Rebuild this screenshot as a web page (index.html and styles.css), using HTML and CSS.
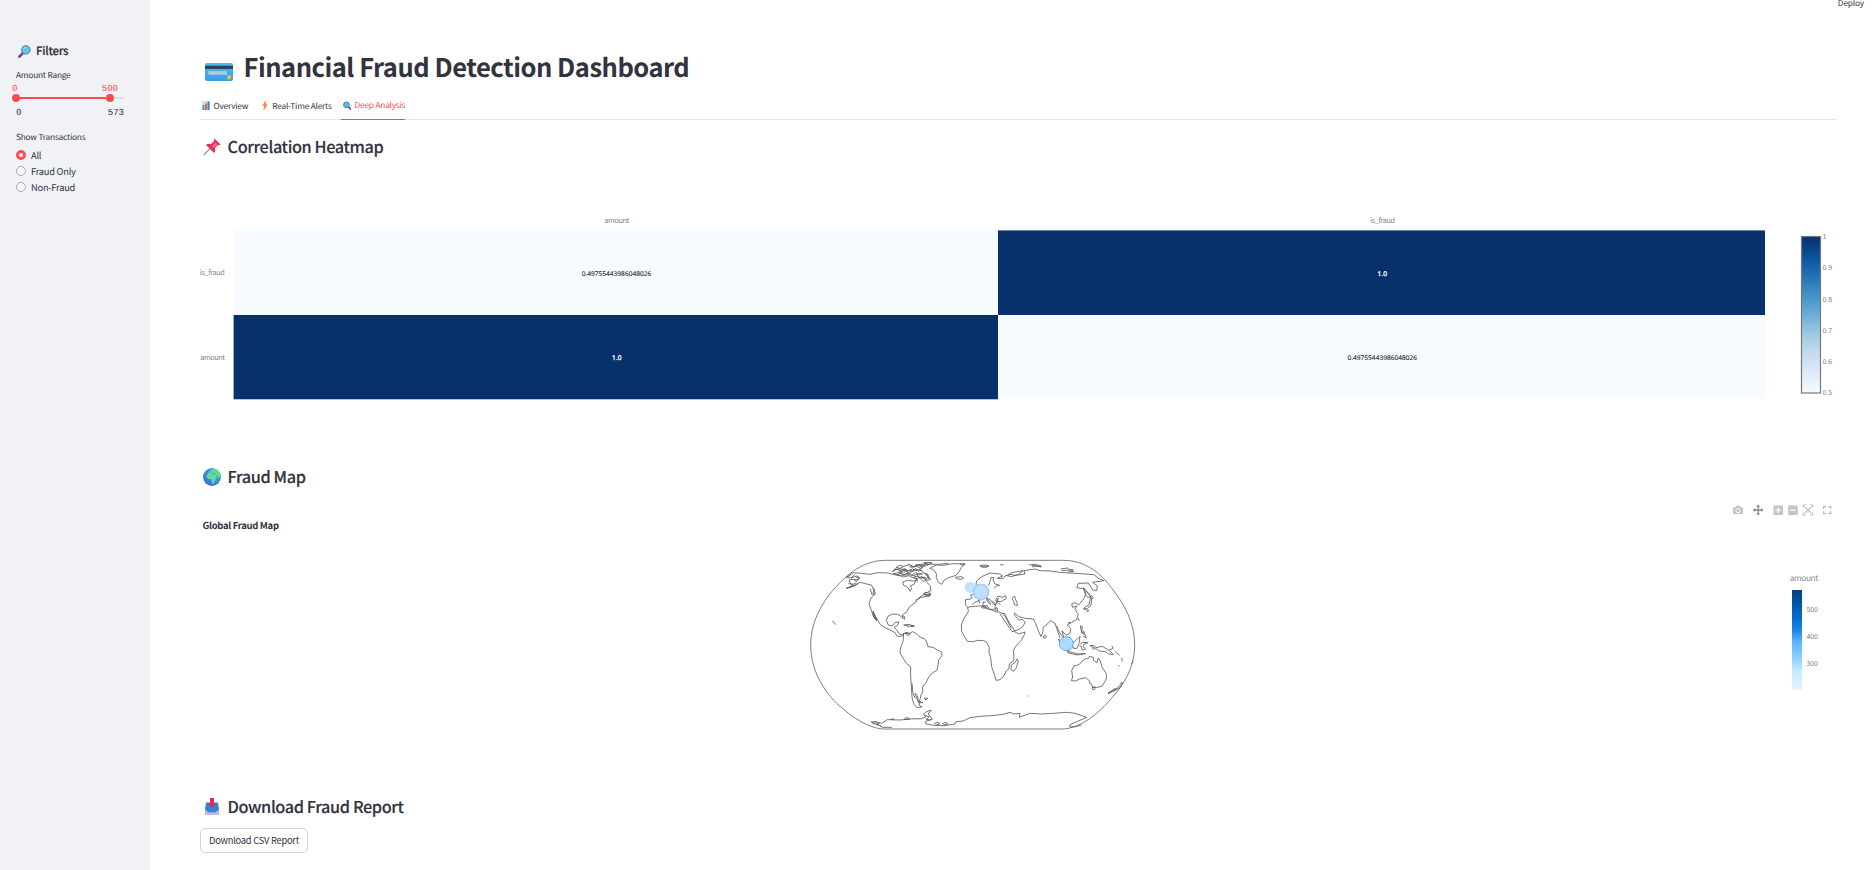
FILE: index.html
```html
<!DOCTYPE html>
<html lang="en">
<head>
<meta charset="utf-8">
<title>Financial Fraud Detection Dashboard</title>
<link rel="stylesheet" href="styles.css">
</head>
<body>
<div class="app">
  <aside class="sidebar">
    <h2 class="side-title">
      <svg class="side-icon" viewBox="0 0 24 24"><path d="M2.500 21.500 10 14" stroke="#7d4a86" stroke-width="5" stroke-linecap="round"/><circle cx="14.500" cy="9" r="7.800" fill="#5fc9ee" stroke="#4d6f9e" stroke-width="1.800"/><path d="M10 8q1-4 5-4" stroke="#9be4fb" stroke-width="1.600" fill="none"/></svg>
      <span class="t-filters">Filters</span>
    </h2>
    <div class="label t-range">Amount Range</div>
    <div class="slider">
      <div class="thumb-values"><span>0</span><span>500</span></div>
      <div class="track"><i class="thumb"></i><i class="fill"></i><i class="thumb"></i></div>
      <div class="limits"><span>0</span><span>573</span></div>
    </div>
    <div class="label t-show">Show Transactions</div>
    <div class="radios">
      <label class="radio"><i class="dot on"></i><span>All</span></label>
      <label class="radio"><i class="dot"></i><span>Fraud Only</span></label>
      <label class="radio"><i class="dot"></i><span>Non-Fraud</span></label>
    </div>
  </aside>

  <main class="main">
    <div class="deploy">Deploy</div>
    <h1 class="title">
      <svg class="card-icon" viewBox="0 0 28 18"><defs><linearGradient id="card" x2="0" y2="1"><stop stop-color="#42c4ee"/><stop offset="1" stop-color="#3a9be6"/></linearGradient></defs><rect width="28" height="18" rx="2" fill="url(#card)"/><rect y="2.700" width="28" height="3.200" fill="#30404f"/><rect x="3.300" y="8" width="18.700" height="3.800" fill="#a4c7e0"/><rect x="5" y="9" width="11.500" height="1.800" fill="#c9c3cb"/><rect x="22.300" y="12.300" width="3.600" height="4" rx="1" fill="#f0c043"/></svg>
      <span>Financial Fraud Detection Dashboard</span>
    </h1>
    <nav class="tabs">
      <a class="tab"><svg class="tab-icon" viewBox="0 0 8 9"><rect width="8" height="9" fill="#d5e0e8"/><path d="M.6 4h1.800v5H.6z" fill="#36b45c"/><path d="M3 2.500h1.900V9H3z" fill="#e0527b"/><path d="M5.500.5h2V9h-2z" fill="#3682d6"/></svg><span>Overview</span></a>
      <a class="tab tab-alerts"><svg class="tab-icon" viewBox="0 0 8 9"><path d="M4.800 0 1.600 4.600h2L2.600 9 6.400 3.800H4.300z" fill="#fa7a3c" stroke="#fa7a3c" stroke-width=".5"/></svg><span>Real-Time Alerts</span></a>
      <a class="tab tab-deep active"><svg class="tab-icon" viewBox="0 0 8 9"><path d="M5.300 5.800 7.600 8" stroke="#6a3f84" stroke-width="1.700" stroke-linecap="round"/><circle cx="3.400" cy="3.800" r="2.900" fill="#4bc0ea" stroke="#3c6f98" stroke-width=".8"/></svg><span>Deep Analysis</span></a>
    </nav>

    <h2 class="section">
      <svg class="section-icon" viewBox="0 0 18 18"><path d="M.8 17 7.500 10" stroke="#a49aa8" stroke-width="1.300"/><path d="M3 7q2-2 5-1l3-3q-.5-1.500.5-2.500l6 6q-1 1-2.500.5l-3 3q1 3-1 5z" fill="#e0325f"/><path d="M9 8l3.500-3.500 2 2L11 10z" fill="#f8618a"/></svg>
      <span class="t-heat">Correlation Heatmap</span>
    </h2>
    <svg class="chart" viewBox="200 161 1637 300">
      <defs><linearGradient id="blues" x2="0" y2="1"><stop stop-color="#08306b"/><stop offset=".125" stop-color="#08519c"/><stop offset=".25" stop-color="#2171b5"/><stop offset=".375" stop-color="#4292c6"/><stop offset=".5" stop-color="#6baed6"/><stop offset=".625" stop-color="#9ecae1"/><stop offset=".75" stop-color="#c6dbef"/><stop offset=".875" stop-color="#deebf7"/><stop offset="1" stop-color="#f7fbff"/></linearGradient></defs>
      <rect x="234" y="230.500" width="765" height="84.500" fill="#f7fbff"/>
      <rect x="998" y="315" width="767" height="84" fill="#f7fbff"/>
      <rect x="998" y="230.400" width="767" height="84.600" fill="#08306b"/>
      <rect x="233.600" y="315" width="764.400" height="84.300" fill="#08306b"/>
      <g class="axis">
        <text x="604.300" y="223" textLength="25">amount</text>
        <text x="1370" y="223" textLength="25">is_fraud</text>
        <text x="199.800" y="275" textLength="25">is_fraud</text>
        <text x="200.300" y="360" textLength="24.700">amount</text>
      </g>
      <g class="cell">
        <text x="581.700" y="276" textLength="69.500">0.49755443986048026</text>
        <text x="1347.500" y="360" textLength="69.500">0.49755443986048026</text>
        <text class="inv" x="612" y="360" textLength="9.500">1.0</text>
        <text class="inv" x="1377.500" y="276" textLength="9.500">1.0</text>
      </g>
      <rect x="1801.500" y="236.500" width="19" height="156.500" fill="url(#blues)" stroke="#777" stroke-width="1.200"/>
      <g class="tick">
        <text x="1822.500" y="239">1</text><text x="1822.500" y="270.200">0.9</text><text x="1822.500" y="302">0.8</text><text x="1822.500" y="333">0.7</text><text x="1822.500" y="364.300">0.6</text><text x="1822.500" y="395.200">0.5</text>
      </g>
    </svg>

    <h2 class="section">
      <svg class="section-icon" viewBox="0 0 18 18"><defs><radialGradient id="sea" cx=".65" cy=".3" r=".8"><stop stop-color="#3cc4ea"/><stop offset="1" stop-color="#3b62d8"/></radialGradient></defs><circle cx="9" cy="9" r="9" fill="url(#sea)"/><path d="M5.500 5 8 2.500l4-2q3.500 1 5.300 5l.2 3-2 1.500-1.500-1-1.500 2-2 5H9.500L8.500 11 5 11 3.500 8.500z" fill="#5fdc9a"/><path d="M8 5l3 1 2-1M13.500 7l1.500 3" stroke="#3aa5c0" fill="none"/></svg>
      <span class="t-map">Fraud Map</span>
    </h2>
    <svg class="chart" viewBox="200 491 1637 300">
      <defs><linearGradient id="amt" x2="0" y2="1"><stop stop-color="#00427c"/><stop offset=".25" stop-color="#0068c9"/><stop offset=".4" stop-color="#1c83e1"/><stop offset=".52" stop-color="#60b4ff"/><stop offset=".65" stop-color="#83c9ff"/><stop offset=".82" stop-color="#c7ebff"/><stop offset="1" stop-color="#e4f5ff"/></linearGradient></defs>
      <text class="chart-title" x="202.500" y="529.300" textLength="76.500">Global Fraud Map</text>

      <!-- mode bar -->
      <g fill="#c4c4c6">
        <path d="M1733 507.500h2.500l1-1.700h3l1 1.700h2.500v6.500h-10z"/><circle cx="1738" cy="510.600" r="2.100" fill="none" stroke="#fff" stroke-width=".9"/>
        <rect x="1773.500" y="505.500" width="9.500" height="9.500"/><path d="M1775.500 510.200h5.500M1778.200 507.500v5.500" stroke="#fff" stroke-width="1.300"/>
        <rect x="1788.200" y="505.500" width="9.500" height="9.500"/><path d="M1790.200 510.200h5.500" stroke="#fff" stroke-width="1.300"/>
        <path d="M1803.300 507.500v-2.300h2.300M1810.300 505.200h2.300v2.300M1812.600 512.500v2.300h-2.300M1805.600 514.800h-2.300v-2.300M1805 507l6 6M1811 507l-6 6" fill="none" stroke="#bbb" stroke-width="1.200"/>
        <path d="M1823.600 509v-2.300h2.400M1828.300 506.700h2.400v2.300M1830.700 511.300v2.300h-2.400M1826 513.600h-2.400v-2.300" fill="none" stroke="#bbb" stroke-width="1.200"/>
        <path d="M1753.500 510h9.500M1758.200 505.300v9.500" stroke="#888" stroke-width="1.300"/><path d="M1753 510l2-2v4zM1763.400 510l-2-2v4zM1758.200 504.800l-2 2h4zM1758.200 515.200l-2-2h4z" fill="#888"/>
      </g>

      <g transform="translate(800 550) scale(.33333)">
        <g class="coast">
          <!-- globe frame -->
          <path class="frame" d="M252 31H790C860 31 907 75 937 117C975 165 1004 220 1004 285C1004 350 975 400 930 450C905 480 845 537 785 537H247C190 532 130 480 100 450C60 405 32 350 32 285C32 220 62 165 95 125C130 85 180 33 252 31Z"/>
          <!-- North America -->
          <path d="M137 83L148 76 160 68 185 70 210 73 235 68 262 69 282 74 300 76 330 74 345 78 352 90 340 93 322 91 308 96 311 106 320 110 327 117 330 124 335 116 331 107 342 103 347 92 355 83 366 80 376 88 382 98 390 107 393 122 382 127 370 132 380 136 392 130 390 138 375 140 360 143 351 150 346 158 335 165 325 174 322 184 308 194 309 207 303 199 293 193 277 192 264 199 259 211 265 225 276 228 285 218 297 216 292 227 283 232 290 240 297 251 308 257 312 249 304 259 292 259 285 248 270 240 252 231 241 224 234 212 224 195 219 184 224 200 230 213 220 198 213 178 207 161 212 147 220 135 223 120 214 105 196 101 181 97 166 104 152 110 139 115 160 106 150 99 147 90 160 88 169 95 180 83 170 78 155 83 165 73"/>
          <path d="M166 80l10 4-3 6-12-2M145 101l14 2 10-5M139 115l20-5 16-9M211 116l5 18M217 116l8 4-6 4 7 3-2 8-7-6M219 183l5 13 7 14M218 192l7 15M311 225l16-2 16 6-14 0zM320 227l5 5M330 228l14 0M314 250l14 1M306 197l8 3 0 9M375 127l16 3-2 7-15-4zM346 151l14-7M357 143l14-9 18 2M97 214l5 3 5 7M153 73l-11 10 14 1"/>
          <!-- Arctic islands -->
          <path d="M277 65l14-8 10 4 14-5 8 6 14-5 14 5 17-9-5-7 20-4-12-4 25 0-20 11-20-4-16 5-12-7-16 6-14-3-12 9zM280 71l22-4 8 8 16-7 9 8 12-9 12 8 10-8 14 10 9 11-10 3-7-10-12 4-10-7-14 5-12-6-16 4zM285 59l15-3 18 5M295 67l22-7 18 5 20-7 15 6M342 76l18-6 8 5M331 52l18-3 14 6 12-10M310 68l8-5 7 8 9-5M374 70l10 3 2 14"/>
          <path d="M288 52l12 3 10-4M296 62l10 3 8-7 10 8M300 72l8-7M330 60l9 3 8-8 8 9 10-4M326 47l14 4 14-5 12 5M350 70l6 14 12-2 8 6 8-6-6-10M340 84l10 4 2 9M362 88l8 6 8-2M290 75l12-5 13 5 10-6"/>
          <!-- Greenland and Iceland -->
          <path d="M345 45l30-3 40 1 30-3M392 53l18-8 20 1 28-5 36 1-10 10-6 12-10 12-22 7-13 7-8 13-9-5-7-15 0-12-8-12-12-4zM466 82l19-2 6 4-7 4-12-1z"/>
          <!-- South America -->
          <path d="M311 252l7-5 11 3 9-5 11 6 12 11 12 4 6 7 5 17 15 2 13 8 13 6 1 11-10 13-2 17-3 13-18 12-7 10-9 18-6 5-3 7 0 14-5 9-2 10-3 9 0 12 8 5-15 2-9-10-5-15-2-20-1-20-2-30 0-28-12-9-9-14-11-18 1-12 3-10 5-12zM317 247l5 10 10-5M336 400l3 30 7 15M345 430l8 8 1 14 15 6-14 0zM372 444l11 1-5 5z"/>
          <!-- Antarctica -->
          <path d="M276 532L247 532 235 524 220 521 214 516 228 515 245 520 262 509 300 510 330 507 365 506 378 500 370 493 378 486 394 480 384 492 392 500 397 508 376 514 378 522 400 526 432 527 465 522 468 515 490 513 510 503 540 499 575 497 610 493 630 487 641 492 660 490 658 502 690 490 725 492 760 490 800 487 825 490 860 502 835 513 810 524 810 531 828 530 845 525"/>
          <path d="M216 518l22 2-8 4 16 5M270 508l12-1-6 3M313 505l12-2 3 5-15 1M402 521l12-5 5 6-13 4M426 521l12-4 6 5-16 4M374 496l14 4-10 8 14 2"/>
          <!-- Africa -->
          <path d="M503 172l10-2 22-2 27-1 5 10 8 3 14 6 8 0 10 4 8 1 6 15 8 14 9 12 7 14 12 6 18-6-2 8-9 17-17 18-7 13 2 18-1 12-13 10-1 14-8 7-9 17-10 9-12 2-4-15-9-26-3-27-5-15 1-16-9-16-8-4-19-1-12 4-18-1-9-15-8-15-1-19 8-20 13-20zM651 327l4 7-6 19-8 11-8-5 1-14 12-8zM682 438l3 0"/>
          <!-- Europe -->
          <path d="M503 171l-6-5-1-17 17-2 4-6-6-5 8-3 10-8M517 165l7-8 9-3 7-6 6-6 12 1 5 12 9 8-4-8-9-12 13 7 8 12 8 3 2-12 5-8-3 12 10 8M543 172l12-4 7 6-15 0M533 152l5 0 0 8"/>
          <path d="M534 112L528 103 530 93 545 80 570 69 598 72 608 78 592 85 610 85 615 78 630 73 645 76 675 72 672 62 705 57 720 62 750 63 780 67 825 70 855 72 882 74 895 85 912 92 878 97 892 108 890 122 878 120 865 99 835 100 830 113 852 116 858 130 852 145 836 165 825 158 815 162 818 172 830 168 825 178 835 193 830 208 815 217 802 225 812 236 810 250 798 256 786 242 792 266 780 250 770 228M565 107l5-12 3-12 9-1-3 8 6 12 14 4-10 2-7 8"/>
          <path d="M577 153l9 8-1 16 6-4 2 10-10-5-18 0-16-8 0-14 8 0M586 151l8-13 13 4 10-5 2 8-14 9-13 1zM636 145l8-7 2 9 5 10 1 10-9-3-2-10z"/>
          <!-- Arctic Ocean islands -->
          <path d="M480 44l15-3-8 9M538 47l14-2 15 2-8 5-16-1M541 49l22 0M600 44l11 1M686 45l20-2 18 6-15-1-12 3M695 46l30 5M782 57l20-3 8 6 12 4-18 2M785 62l34-3M622 77l10-8 20-4 18-3-14 11-22 7z"/>
          <!-- Southern Asia -->
          <path d="M600 191l9 14 12 18 15 22 17-5 14-9 9-14-10-9-9 3-6-7-8-10 0-5 14 11 18 5 25 2 7 13 6 18 10 22 6-15 0-12 24-21 12 8 5 15 8 23 2 6M730 258l7-2 2 6-7 3zM803 219l7-2 0 5M832 208l3-3 3 8M606 190l10 10 18 35"/>
          <!-- Japan -->
          <path d="M851 113l6 8 9 12 6 7-9 2-7-9-4-12zM872 139l3 11-2 16-12 10-11 1 6-7 11-5 3-15zM853 177l14 5-7 3M861 125l10 10 10 8-8 5"/>
          <!-- Indonesia and the Philippines -->
          <path d="M775 267l12 10 12 14 8 13-13-6-12-17zM818 280l12-11 10-10-3 22-7 15-12-2zM801 305l16 2 16 5 24-1-26 4-28-7M841 282l7-5 16 1-12 5-3 6 8 8-10 3-3-11-6-2M841 228l6 2-2 10 9 7-9 0zM847 250l8 3 4 11-10-6M843 245l12 9M870 287l12-1 6 7 18-4 18 10 16 14-14-1-10-7-18-2-10-7zM876 293l8 6M928 300l11-5-3-7M945 305l14 11M955 345l3 5M967 334l-2-10M993 342l5-4 0-6"/>
          <!-- Oceania -->
          <path d="M814 392l4-11-3-19 7-14 15-4 10-11 10-7 9 0 2-7 12 3 0 9 11 7 4-14 6 9 5 18 13 20 0 16-7 12-6 9-17 5-12-3-3-8-5-2 0-7-12-10-18 4-12 6zM877 412l10 0-5 8-5-2zM950 415l8-6 8-13 0 8-4 8-14 8-24 11 18-14zM924 428l26-11"/>
        </g>
        <circle cx="511" cy="112" r="17" fill="#bfe4ff"/>
        <circle cx="543" cy="126" r="24" fill="#bfe0fd" stroke="#7db6ef" stroke-width="2"/><circle cx="543" cy="126" r="20" fill="none" stroke="#a5cdf7" stroke-width="2"/>
        <circle cx="799" cy="281" r="21" fill="#b0dafd" stroke="#4c9fee" stroke-width="2.500"/>
      </g>

      <text class="tick legend" x="1789.700" y="581" textLength="28.700">amount</text>
      <rect x="1792" y="590" width="10" height="100" fill="url(#amt)"/>
      <g class="tick"><text x="1806.500" y="612.200" textLength="11.500">500</text><text x="1806.500" y="639.200" textLength="11.500">400</text><text x="1806.500" y="666.200" textLength="11.500">300</text></g>
    </svg>

    <h2 class="section">
      <svg class="section-icon" viewBox="0 0 18 18"><path d="M2 9h14v7.500H2z" fill="#b9a8d6"/><path d="M3 4.500h12l1 7-3 3H5l-3-3z" fill="#2f86d8"/><path d="M2 11.500l3.500 3h7l3.500-3V17H2z" fill="#c5b6e2"/><path d="M7 0h4v5.500h2.300L9 10 4.700 5.500H7z" fill="#dc2b57"/></svg>
      <span class="t-dl">Download Fraud Report</span>
    </h2>
    <button class="download"><span>Download CSV Report</span></button>
  </main>
</div>
</body>
</html>
```

FILE: styles.css
```css
* { box-sizing: border-box; }
html, body { margin: 0; height: 100%; overflow: hidden; background: #fff; }
body { font-family: "Noto Sans CJK JP", "Noto Sans CJK SC", sans-serif; color: #31333f; font-size: 8.300px; text-rendering: geometricPrecision; }
svg { display: block; }
h1, h2 { margin: 0; white-space: nowrap; }
span { white-space: nowrap; }

.app { display: flex; height: 870px; }

.sidebar { flex: 0 0 150px; background: #f0f2f6; padding: 41px 26px 0 16px; }
.side-title { display: flex; align-items: center; height: 20px; font-size: 11.400px; font-weight: 500; padding-left: 2px; gap: 5px; letter-spacing: -.02em; -webkit-text-stroke: .2px #31333f; }
.side-icon { width: 13px; height: 13px; }
.label { height: 14px; line-height: 14px; margin-top: 7px; letter-spacing: -.025em; }
.slider { font-family: "Liberation Mono", monospace; font-size: 9.200px; letter-spacing: -.1px; }
.thumb-values { display: flex; justify-content: space-between; width: 106px; margin-left: -4px; color: #ff4b4b; height: 12px; line-height: 13px; }
.track { display: flex; align-items: center; height: 8px; margin: 0 0 0 -4px; width: 112px; background: linear-gradient(#d9dfe8, #d9dfe8) 4px 3px / 108px 2px no-repeat; }
.thumb { width: 8px; height: 8px; border-radius: 50%; background: #ff4b4b; }
.fill { width: 86px; height: 2px; background: #ff4b4b; }
.limits { display: flex; justify-content: space-between; margin-top: 4px; height: 12px; line-height: 13px; }
.label.t-show { margin-top: 12px; }
.radios { margin-top: 3px; }
.radio { display: flex; align-items: center; gap: 5px; height: 16px; font-size: 9.300px; letter-spacing: -.025em; }
.dot { width: 10px; height: 10px; border-radius: 50%; border: 1px solid #a8abb5; background: #fafbfd; }
.dot.on { border: 3px solid #ff4b4b; background: #fff; }

.main { flex: 1; position: relative; padding: 45px 37px 0 50px; }
.deploy { position: absolute; top: -4px; right: 10px; line-height: 14px; letter-spacing: -.02em; }
.title { display: flex; align-items: center; height: 40px; font-size: 25.500px; line-height: 40px; font-weight: 700; padding-left: 4.500px; gap: 11px; letter-spacing: -.019em; }
.title span { padding-top: 4px; }
.card-icon { width: 28px; height: 18px; margin-top: 14px; }
.tabs { display: flex; height: 35px; border-bottom: 1px solid #e3e4e8; letter-spacing: -.025em; }
.tab { display: flex; align-items: center; height: 35px; padding: 6px 0 0 2px; gap: 3.500px; line-height: 16px; }
.tab-icon { width: 8px; height: 9px; }
.tab-alerts { margin-left: 10.500px; }
.tab-deep { margin-left: 9.500px; }
.tab.active { color: #ff4b4b; border-bottom: 1px solid #ff4b4b; }
.section { display: flex; align-items: center; height: 30px; line-height: 30px; font-size: 16.300px; font-weight: 500; padding-left: 3px; gap: 6.500px; letter-spacing: -.024em; -webkit-text-stroke: .15px #31333f; }
.section span { height: 30px; }
.tabs + .section { margin-top: 11px; }
.section-icon { width: 18px; height: 18px; margin-top: 2px; }
.chart { width: 1637px; height: 300px; }
.download { display: flex; align-items: center; justify-content: center; width: 108px; height: 25px; margin-top: 7px; padding: 0 0 2px; background: #fff; border: 1px solid #d3d4d9; border-radius: 5px; font: 9.300px "Noto Sans CJK JP", sans-serif; letter-spacing: -.025em; color: #31333f; }

.axis { font-size: 7.300px; fill: #808495; }
.cell { font-family: "Open Sans", sans-serif; font-size: 6.500px; fill: #222; stroke: #222; stroke-width: .12px; }
.cell .inv { fill: #fff; stroke: #fff; stroke-width: .3px; }
.tick { font-size: 7px; fill: #808495; }
.legend { font-size: 8.300px; }
.chart-title { font-size: 9.500px; font-weight: 700; fill: #31333f; }
.coast { fill: none; stroke: #5a5a5a; stroke-width: 2.500; stroke-linejoin: round; }
.frame { stroke: #666; stroke-width: 2.500; }
```
